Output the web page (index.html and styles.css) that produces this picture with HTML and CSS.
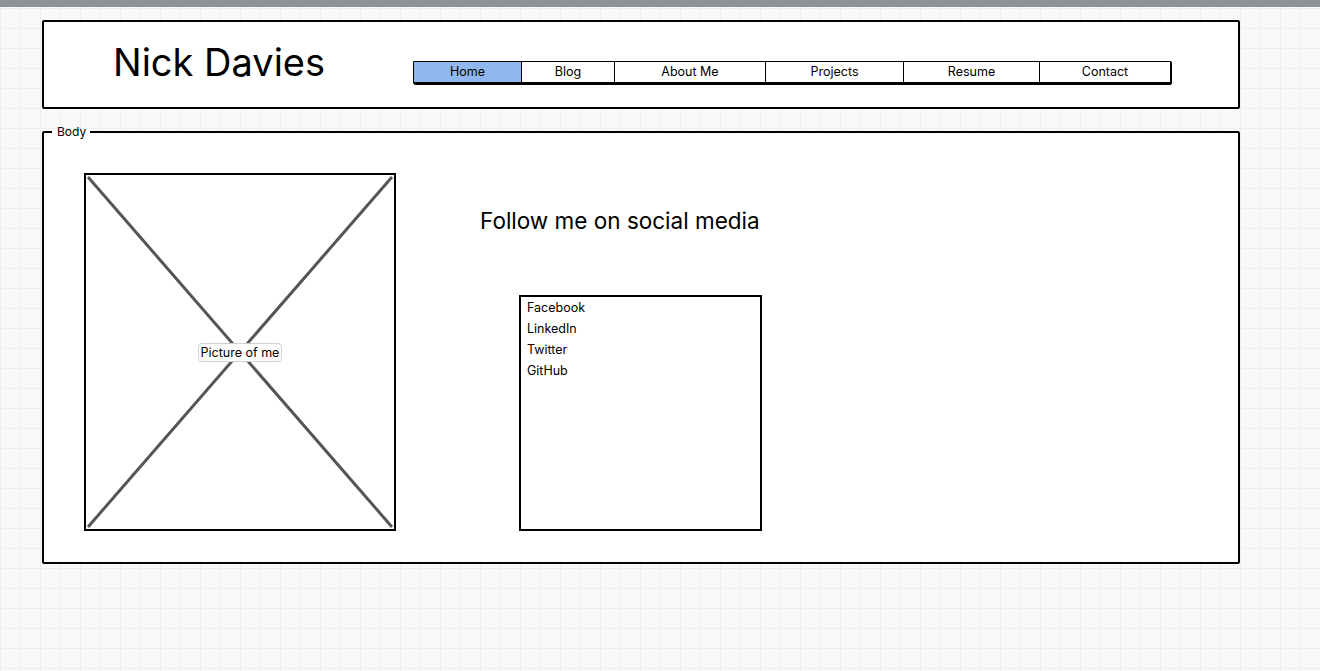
FILE: index.html
```html
<!DOCTYPE html>
<html>

<head>
  <meta charset="UTF-8">
  <title>Nick Davies</title>
  <link rel="stylesheet" href="styles.css">
</head>

<body>
  <div class="topbar"></div>
  <div class="canvas">
    <header class="header">
      <div class="title">Nick Davies</div>
      <nav class="nav">
        <a class="nav-item active home">Home</a>
        <a class="nav-item blog">Blog</a>
        <a class="nav-item about">About Me</a>
        <a class="nav-item projects">Projects</a>
        <a class="nav-item resume">Resume</a>
        <a class="nav-item contact">Contact</a>
      </nav>
    </header>

    <fieldset class="body-box">
      <legend>Body</legend>
      <div class="body-content">
        <div class="picture">
          <svg class="cross" viewBox="0 0 308 352" preserveAspectRatio="none">
            <line x1="2" y1="2" x2="306" y2="350" />
            <line x1="306" y1="2" x2="2" y2="350" />
          </svg>
          <span class="picture-label">Picture of me</span>
        </div>
        <section class="social">
          <div class="social-heading">Follow me on social media</div>
          <ul class="social-list">
            <li>Facebook</li>
            <li>LinkedIn</li>
            <li>Twitter</li>
            <li>GitHub</li>
          </ul>
        </section>
      </div>
    </fieldset>
  </div>
</body>

</html>
```

FILE: styles.css
```css
*,
html,
body {
  margin: 0;
  padding: 0;
  box-sizing: border-box;
  font-family: Inter, "Noto Sans", sans-serif;
}

body {
  background-color: #f9f9f9;
  background-image:
    linear-gradient(to right, #eeeeee 1px, transparent 1px),
    linear-gradient(to bottom, #eeeeee 1px, transparent 1px);
  background-size: 20px 20px;
  background-position: 0 8px;
  height: 671px;
  overflow: hidden;
}

.topbar {
  height: 7px;
  background-color: #8e9196;
}

.canvas {
  padding: 13px 0 0 42px;
  width: 1240px;
}

.header {
  display: flex;
  align-items: flex-start;
  height: 89px;
  border: 2px solid #000;
  border-radius: 2px;
  background-color: #fff;
}

.title {
  width: 369px;
  padding-left: 69px;
  margin-top: 22px;
  font-size: 38px;
  line-height: 37px;
  font-weight: 400;
  color: #000;
}

.nav {
  display: flex;
  margin-top: 39px;
  border: 1px solid #000;
  border-bottom-width: 3px;
  border-right-width: 2px;
  border-radius: 1px 2px 2px 3px;
}

.nav-item {
  display: block;
  height: 20px;
  line-height: 20px;
  font-size: 12.5px;
  text-align: center;
  color: #000;
  border-right: 1px solid #000;
}

.nav-item:last-child {
  border-right: none;
}

.nav-item.active {
  background-color: #90b8ee;
}

.home { width: 108px; }
.blog { width: 93px; }
.about { width: 151px; }
.projects { width: 138px; }
.resume { width: 136px; }
.contact { width: 130px; }

.body-box {
  margin-top: 16px;
  height: 439px;
  border: 2px solid #000;
  border-radius: 2px;
  background-color: #fff;
  padding: 0;
}

.body-box legend {
  margin-left: 8px;
  padding: 0 4px 0 5px;
  font-size: 12px;
  line-height: 14px;
  color: #000;
}

.body-content {
  display: flex;
  align-items: flex-start;
  padding: 34px 0 0 40px;
}

.picture {
  position: relative;
  flex-shrink: 0;
  width: 312px;
  height: 358px;
  border: 2px solid #000;
  display: flex;
  align-items: center;
  justify-content: center;
}

.cross {
  position: absolute;
  top: 0;
  left: 0;
  width: 100%;
  height: 100%;
}

.cross line {
  stroke: #555;
  stroke-width: 3;
}

.picture-label {
  position: relative;
  background-color: #fff;
  border: 1px solid #cfcfcf;
  border-radius: 4px;
  padding: 0 2px;
  font-size: 12.5px;
  line-height: 17px;
  color: #000;
}

.social {
  margin-left: 84px;
  padding-top: 35px;
}

.social-heading {
  font-size: 22.5px;
  line-height: 26px;
  color: #000;
}

.social-list {
  list-style: none;
  margin: 61px 0 0 39px;
  width: 243px;
  height: 236px;
  border: 2px solid #000;
  padding: 0 0 0 6px;
}

.social-list li {
  font-size: 12.5px;
  line-height: 21px;
  color: #000;
}
```
